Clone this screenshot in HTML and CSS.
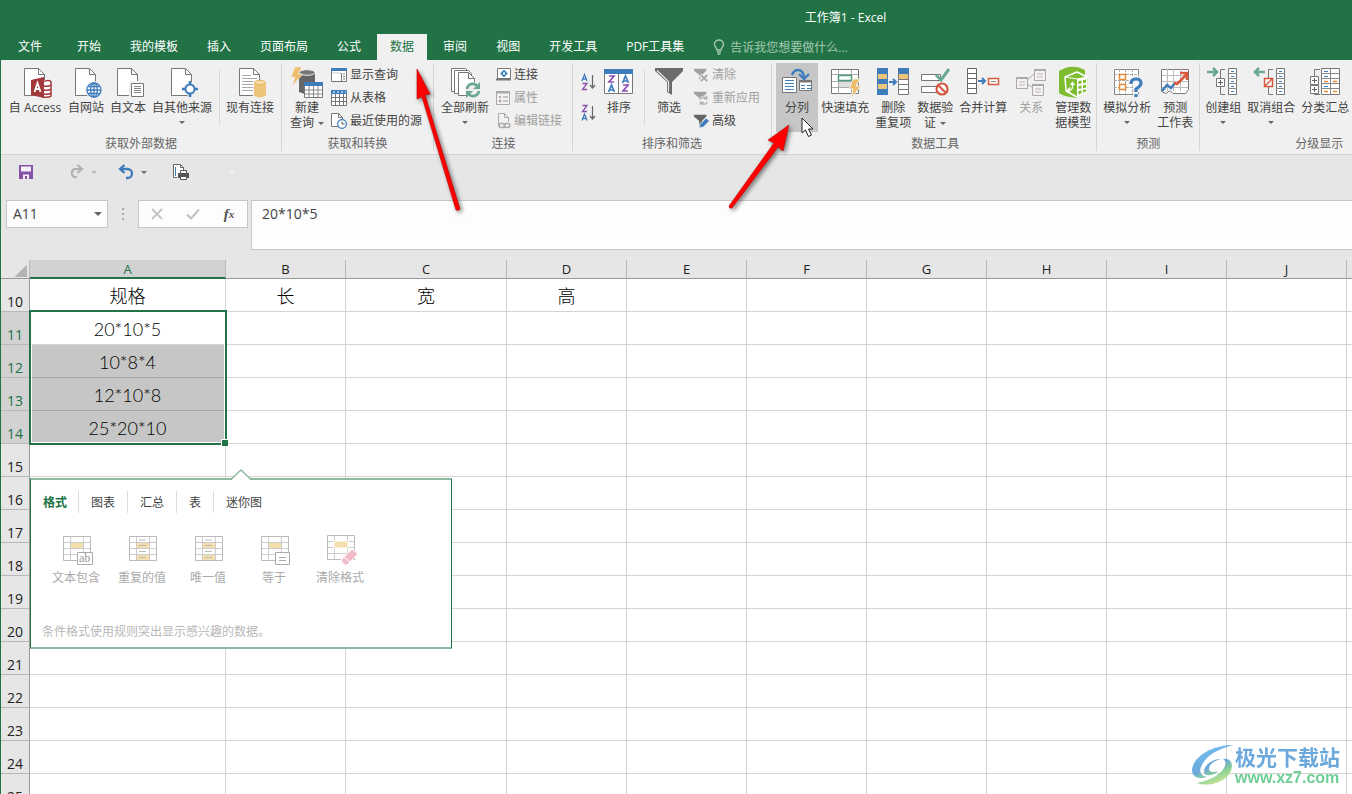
FILE: index.html
```html
<!DOCTYPE html>
<html lang="zh-CN">
<head>
<meta charset="utf-8">
<title>工作簿1 - Excel</title>
<link rel="stylesheet" href="styles.css">
</head>
<body>
<svg class="defs" aria-hidden="true">
  <symbol id="doc" viewBox="0 0 36 32"><path d="M7.5 1.5h14l6 6v21h-20z" fill="#fff" stroke="#777"/><path d="M21.5 1.5v6h6" fill="none" stroke="#777"/></symbol>
  <symbol id="funnel" viewBox="0 0 18 16"><path d="M1 1h14v2L10 8v7l-3-2V8L1 3z" fill="currentColor"/></symbol>
  <linearGradient id="wave" gradientUnits="userSpaceOnUse" x1="14" y1="4" x2="28" y2="38"><stop offset="0" stop-color="#62b4ee"/><stop offset=".5" stop-color="#5b9fd8"/><stop offset=".75" stop-color="#7fd08a"/><stop offset="1" stop-color="#c5e08a"/></linearGradient>
</svg>
<div class="window">
  <header class="titlebar">
    <h1 class="title">工作簿1 - Excel</h1>
    <nav class="tabs">
      <button class="tab tab-file">文件</button>
      <button class="tab">开始</button>
      <button class="tab">我的模板</button>
      <button class="tab">插入</button>
      <button class="tab">页面布局</button>
      <button class="tab">公式</button>
      <button class="tab tab-active">数据</button>
      <button class="tab">审阅</button>
      <button class="tab">视图</button>
      <button class="tab">开发工具</button>
      <button class="tab">PDF工具集</button>
      <label class="tellme">
        <svg width="12" height="16" viewBox="0 0 12 16" fill="none" stroke="#a5c9b3" stroke-width="1.4"><path d="M4 11C4 9 1.500 8 1.500 5.200a4.500 4.200 0 0 1 9 0C10.500 8 8 9 8 11z"/><path d="M4 13h4M4.500 15h3"/></svg>
        <input type="text" aria-label="告诉我" placeholder="告诉我您想要做什么...">
      </label>
    </nav>
  </header>

  <section class="ribbon">
    <div class="group">
      <div class="tools">
        <button class="big big-wide"><svg class="ico" viewBox="0 0 36 32"><use href="#doc"/><path d="M25 13h9v17h-9z" fill="#fff"/><path d="M25 15q8-3 9 0v14q-2 2-9 1" fill="#fff" stroke="#a4373a" stroke-width="1.500"/><path d="M26 19q6 1 8-1M26 23q6 1 8-1M26 27q6 1 8-1" stroke="#a4373a" stroke-width="1.500" fill="none"/><path d="M14 13l13-3v21l-13-3z" fill="#a4373a"/><path d="M17.500 25l3-9 3 9M18.500 22h4" stroke="#fff" stroke-width="1.800" fill="none"/></svg><span>自 Access</span></button>
        <button class="big"><svg class="ico" viewBox="0 0 36 32"><use href="#doc"/><circle cx="26" cy="23" r="9" fill="#f0f0f0"/><g fill="#fff" stroke="#3f7cbc" stroke-width="1.300"><circle cx="26" cy="23" r="7"/><ellipse cx="26" cy="23" rx="3.300" ry="7"/><path d="M26 16v14M19 23h14M20.500 19.500h11M20.500 26.500h11" fill="none"/></g></svg><span>自网站</span></button>
        <button class="big"><svg class="ico" viewBox="0 0 36 32"><use href="#doc"/><path d="M19 14h16v18H19z" fill="#f0f0f0"/><path d="M21.500 16.500h12v13h-12z" fill="#fff" stroke="#777"/><path d="M24 19.500h7M24 21.500h7M24 23.500h7M24 25.500h7" stroke="#888"/></svg><span>自文本</span></button>
        <button class="big"><svg class="ico" viewBox="0 0 36 32"><use href="#doc"/><circle cx="26" cy="22" r="7" fill="#f0f0f0"/><circle cx="26" cy="22" r="4.500" fill="#fff" stroke="#3f7cbc" stroke-width="2"/><path d="M26 14v4M26 26v4M18 22h4M30 22h4" stroke="#3f7cbc" stroke-width="2.500"/></svg><span>自其他来源</span><i class="caret"></i></button>
        <span class="rule"></span>
        <button class="big"><svg class="ico" viewBox="0 0 36 32"><use href="#doc"/><path d="M10 8.500h9M10 11.500h15M10 14.500h11M10 17.500h11M10 20.500h11M10 23.500h11" stroke="#aaa"/><path d="M21 14h14v18H21z" fill="#f0f0f0"/><path d="M22 15.500v13q6 4 12 0v-13z" fill="#edc57a"/><ellipse cx="28" cy="15.500" rx="5.500" ry="2.200" fill="#f5dcab" stroke="#e6b860"/></svg><span>现有连接</span></button>
      </div>
      <div class="caption">获取外部数据</div>
    </div>

    <div class="group">
      <div class="tools">
        <button class="big"><svg class="ico" viewBox="0 0 36 32"><path d="M10 6v19q8 4 16 0V6z" fill="#666"/><ellipse cx="18" cy="5.500" rx="8" ry="2.800" fill="#777" stroke="#f0f0f0"/><path d="M6 0h7L9 7h5L3 19l3-9H2z" fill="#edbd6c" stroke="#f0f0f0" stroke-width=".6"/><path d="M15.500 15.500h18v15h-18z" fill="#fff" stroke="#777"/><path d="M15 15h19v4H15z" fill="#3f7cbc"/><path d="M20 19v11M24.500 19v11M29 19v11M16 23h17M16 27h17" stroke="#888"/></svg><span>新建<br>查询 <i class="caret inline"></i></span></button>
        <div class="stack">
          <button class="small"><svg width="16" height="16" viewBox="0 0 16 16"><path d="M.5 1.500h15v13H.5z" fill="#fff" stroke="#777"/><path d="M0 1h16v3H0z" fill="#3f7cbc"/><path d="M1 6h9" stroke="#ccc"/><path d="M10.500 6v8M12 7h2M12 9.500h2M12 12h2" stroke="#777"/></svg>显示查询</button>
          <button class="small"><svg width="16" height="16" viewBox="0 0 16 16"><path d="M.5 1.500h15v14H.5z" fill="#fff" stroke="#777"/><path d="M0 0h16v4H0z" fill="#3f7cbc"/><path d="M2 2h2M6 2h2M10 2h2M14 2h1" stroke="#fff"/><path d="M4.500 4v11M8.500 4v11M12.500 4v11M0 7.500h15M0 11.500h15" stroke="#777"/></svg>从表格</button>
          <button class="small"><svg width="16" height="16" viewBox="0 0 16 16"><path d="M.5.5h7l4 4v9H.5z" fill="#fff" stroke="#777"/><path d="M7.500.5v4h4" fill="none" stroke="#777"/><circle cx="11" cy="11" r="4.400" fill="#fff" stroke="#3f7cbc" stroke-width="1.200"/><path d="M11 8.500V11h2.500" fill="none" stroke="#555"/></svg>最近使用的源</button>
        </div>
      </div>
      <div class="caption">获取和转换</div>
    </div>

    <div class="group group-links">
      <div class="tools">
        <button class="big"><svg class="ico" viewBox="0 0 36 32"><g fill="#fff" stroke="#777"><path d="M4.500 1.500h14l3 3v20h-17z"/><path d="M7.500 3.500h14l3 3v20h-17z"/><path d="M11.500 5.500h10l6 6v17h-16z"/><path d="M21.500 5.500v6h6" fill="none"/></g><circle cx="26" cy="23" r="8" fill="#f0f0f0"/><path d="M20 22a6 6 0 0 1 10.500-3M32 24a6 6 0 0 1-10.500 3" fill="none" stroke="#6aa892" stroke-width="2.600"/><path d="M33 15v7h-7zM19 31v-7h7z" fill="#6aa892"/></svg><span>全部刷新</span><i class="caret"></i></button>
        <div class="stack">
          <button class="small"><svg width="16" height="16" viewBox="0 0 16 16"><path d="M2.500 1.500h13v10h-13z" fill="#fff" stroke="#777"/><path d="M1 12.500h15" stroke="#777" stroke-width="2"/><circle cx="9" cy="6.500" r="2" fill="#fff" stroke="#3f7cbc" stroke-width="1.600"/><path d="M9 3v2M9 8v2M5.500 6.500h2M10.500 6.500h2" stroke="#3f7cbc" stroke-width="1.500"/></svg>连接</button>
          <button class="small" disabled><svg width="16" height="16" viewBox="0 0 16 16"><path d="M1.500 1.500h13v13h-13z" fill="#f4f0f4" stroke="#aaa"/><path d="M1 2.500h14" stroke="#aaa" stroke-width="2"/><circle cx="5" cy="7" r="1" fill="#999"/><circle cx="5" cy="11" r="1" fill="none" stroke="#999"/><path d="M8 7h5M8 11h5" stroke="#999"/></svg>属性</button>
          <button class="small" disabled><svg width="16" height="16" viewBox="0 0 16 16"><path d="M5 12.500H3.500v-12h6l4 4V9" fill="#f4f0f4" stroke="#aaa"/><path d="M9.500.5v4h4" fill="none" stroke="#aaa"/><rect x="4" y="10.500" width="6" height="4" rx="2" fill="none" stroke="#aaa" stroke-width="1.300"/><rect x="9" y="10.500" width="6" height="4" rx="2" fill="none" stroke="#aaa" stroke-width="1.300"/></svg>编辑链接</button>
        </div>
      </div>
      <div class="caption">连接</div>
    </div>

    <div class="group">
      <div class="tools">
        <div class="sorts">
          <button class="sort" aria-label="升序"><svg width="16" height="18" viewBox="0 0 16 18" fill="none"><path d="M2 8l2.500-6.500L7 8M3 6h3" stroke="#3f7cbc" stroke-width="1.300"/><path d="M2.500 10.500H7l-4.500 6H7" stroke="#8a4fae" stroke-width="1.300"/><path d="M12.500 2v13M10 12l2.500 3 2.500-3" stroke="#666" stroke-width="1.200"/></svg></button>
          <button class="sort" aria-label="降序"><svg width="16" height="18" viewBox="0 0 16 18" fill="none"><path d="M2.500 1.500H7L2.500 7.500H7" stroke="#8a4fae" stroke-width="1.300"/><path d="M2 16.500L4.500 10 7 16.500M3 14.500h3" stroke="#3f7cbc" stroke-width="1.300"/><path d="M12.500 2v13M10 12l2.500 3 2.500-3" stroke="#666" stroke-width="1.200"/></svg></button>
        </div>
        <button class="big"><svg class="ico" viewBox="0 0 36 32"><path d="M3.500 2.500h28v24h-28z" fill="#fff" stroke="#777"/><path d="M3 2h29v5H3z" fill="#3f7cbc"/><path d="M17.500 7v19" stroke="#777"/><g fill="none" stroke-width="1.700"><path d="M8 9h5l-5 6h5M22 18h5l-5 6h5" stroke="#8a4fae"/><path d="M7.500 25l3-7 3 7M9 23h3M21.500 16l3-7 3 7M23 14h3" stroke="#3f7cbc"/></g></svg><span>排序</span></button>
        <span class="rule"></span>
        <button class="big"><svg class="ico" viewBox="0 0 36 32"><path d="M4 1h28v3L21 15v13l-5-3V15L4 4z" fill="#6b6b6b"/><path d="M6 3.500l11.500 11V25" stroke="#e8e8e8" fill="none" stroke-width="1.200"/></svg><span>筛选</span></button>
        <div class="stack">
          <button class="small" disabled><svg width="16" height="16" viewBox="0 0 18 16"><use href="#funnel"/><path d="M8 8l8 7M16 8l-8 7" stroke="#f0f0f0" stroke-width="4"/><path d="M9 8l7 7M16 8l-7 7" stroke="#aaa" stroke-width="2"/></svg>清除</button>
          <button class="small" disabled><svg width="16" height="16" viewBox="0 0 18 16"><use href="#funnel"/><circle cx="12" cy="11" r="5.500" fill="#f0f0f0"/><path d="M8 10a4 4 0 0 1 7-1.500M16 12a4 4 0 0 1-7 1.500M15.500 5.500v3.500H12M8.500 16v-3H12" fill="none" stroke="#aaa" stroke-width="1.400"/></svg>重新应用</button>
          <button class="small"><svg width="16" height="16" viewBox="0 0 18 16"><g color="#666"><use href="#funnel"/></g><path d="M6.500 16l1.500-4.500 7-7 3.500 3.500-7 7z" fill="#3f7cbc" stroke="#f0f0f0"/></svg>高级</button>
        </div>
      </div>
      <div class="caption">排序和筛选</div>
    </div>

    <div class="group group-data">
      <div class="tools">
        <button class="big pressed"><svg class="ico" viewBox="0 0 36 32"><path d="M13 8q2-5 6-5 5 0 6 7" fill="none" stroke="#3f7cbc" stroke-width="2.600"/><path d="M20 7l5 5 5-5" fill="none" stroke="#3f7cbc" stroke-width="2.300"/><path d="M3.500 10.500h14v15h-14z" fill="#fff" stroke="#777"/><path d="M6 13.500h9M6 16.500h9M6 19.500h9M6 22.500h9" stroke="#3f7cbc"/><path d="M20.500 13.500h12v10h-12z" fill="#fff" stroke="#777"/><path d="M20 14.500h13" stroke="#777" stroke-width="2"/><path d="M22 18.500h4M28 18.500h4M22 21.500h4M28 21.500h4" stroke="#3f7cbc"/></svg><span>分列</span></button>
        <button class="big"><svg class="ico" viewBox="0 0 36 32"><path d="M4.500 2.500h27v24h-27z" fill="#fff" stroke="#777"/><path d="M11.500 3v24M24.500 3v24M5 7.500h26M5 14.500h26M5 20.500h26" stroke="#aaa"/><path d="M12 15h12v5H12z" fill="#ddd"/><path d="M11.500 8.500h13v5h-13z" fill="#fff" stroke="#4f9b80" stroke-width="1.500"/><path d="M26 12h7l-4 7h5L24 31l2-9h-4z" fill="#edbd6c" stroke="#f0f0f0"/></svg><span>快速填充</span></button>
        <button class="big"><svg class="ico" viewBox="0 0 36 32"><path d="M2 1h11v27H2z" fill="#3f7cbc"/><path d="M3 7h9v5H3zM3 17h9v5H3z" fill="#edc57a"/><path d="M23.500 1.500h10v26h-10z" fill="#fff" stroke="#777"/><path d="M23 1h11v6H23z" fill="#3f7cbc"/><path d="M24 7h9v5h-9z" fill="#edc57a"/><path d="M23 12.500h11M23 17.500h11M23 22.500h11" stroke="#777"/><path d="M14 15h6M18 12l3 3-3 3" fill="none" stroke="#3f7cbc" stroke-width="2"/></svg><span>删除<br>重复项</span></button>
        <button class="big"><svg class="ico" viewBox="0 0 36 32"><path d="M4.500 7.500h19v6h-19zM4.500 19.500h19v6h-19z" fill="#fff" stroke="#777"/><path d="M19 8l5 5 8-11" fill="none" stroke="#6aa892" stroke-width="3"/><circle cx="25" cy="22" r="5.500" fill="#fff" stroke="#d35a42" stroke-width="2.200"/><path d="M21 18l8 8" stroke="#d35a42" stroke-width="2.200"/></svg><span>数据验<br>证 <i class="caret inline"></i></span></button>
        <button class="big"><svg class="ico" viewBox="0 0 36 32"><path d="M2.500 1.500h9v25h-9z" fill="#fff" stroke="#666"/><path d="M2 6.500h9M2 11.500h9M2 16.500h9M2 21.500h9" stroke="#666"/><path d="M13 14h6M17 11l3 3-3 3" fill="none" stroke="#3f7cbc" stroke-width="2"/><path d="M23.500 11.500h10v6h-10z" fill="#fff" stroke="#d9593d" stroke-width="1.500"/><path d="M26 14.500h5" stroke="#888"/></svg><span>合并计算</span></button>
        <button class="big" disabled><svg class="ico" viewBox="0 0 36 32"><path d="M14 13l8-7M14 17l8 5" stroke="#aaa"/><g fill="#f4f0f4" stroke="#aaa"><path d="M3.500 10.500h11v11h-11zM21.500 2.500h11v11h-11zM19.500 17.500h11v11h-11z"/></g><path d="M3 11h12M21 3h12M19 18h12" stroke="#aaa" stroke-width="2"/><path d="M6 15h6M6 18h6M24 7h6M24 10h6M22 22h6M22 25h6" stroke="#bbb"/></svg><span>关系</span></button>
        <button class="big"><svg class="ico" viewBox="0 0 36 32"><path d="M4 4q13-8 26-1v7l3 1v14l-11 6Q9 30 4 26z" fill="#7dbb2f"/><path d="M10 10l12-5 10 5v15l-10 5-11-6z" fill="#7dbb2f" stroke="#fff" stroke-width="1.500" stroke-linejoin="round"/><path d="M10 10l12 2 10-2" fill="none" stroke="#fff"/><path d="M22 12l10-2v15l-10 5z" fill="#fff"/><path d="M23.500 14l3-.5v3l-3 .5zM28 13.200l3-.6v3l-3 .6zM23.500 19l3-.5v3l-3 .5zM28 18.200l3-.6v3l-3 .6zM23.500 24l3-.7v3l-3 1.200zM28 23l3-.7v2l-3 1.500z" fill="#7dbb2f"/><path d="M13 23h2.500q2-.5 2-3v-4M15.500 18l2-2.500 2 2.500M15 20.500L12.500 23l2.500 2" stroke="#fff" fill="none" stroke-width="1.300"/></svg><span>管理数<br>据模型</span></button>
      </div>
      <div class="caption">数据工具</div>
    </div>

    <div class="group group-forecast">
      <div class="tools">
        <button class="big"><svg class="ico" viewBox="0 0 36 32"><path d="M5.500 2.500h24v25h-24z" fill="#fff" stroke="#888"/><path d="M10.500 2v25M16.500 2v25M23.500 2v25M5 7.500h25M5 13.500h25M5 20.500h25" stroke="#aaa" stroke-dasharray="3 1"/><path d="M10.500 7.500h6v5h-6zM10.500 17.500h6v5h-6z" fill="#fff" stroke="#e88b35" stroke-width="1.500"/><path d="M22 17q0-5 5-5t5 4q0 3-5 6v3M27 27v4" fill="none" stroke="#f0f0f0" stroke-width="6"/><path d="M22 17q0-5 5-5t5 4q0 3-5 6v3M27 27v3" fill="none" stroke="#3f7cbc" stroke-width="3.200"/></svg><span>模拟分析</span><i class="caret"></i></button>
        <button class="big"><svg class="ico" viewBox="0 0 36 32"><path d="M4.500 2.500h27v20l-3 4H16l-3-3-4 3-4.500-2z" fill="#fff" stroke="#777"/><path d="M10.500 2v22M16.500 2v22M23.500 2v22M5 8.500h26M5 14.500h26M5 20.500h26" stroke="#bbb"/><path d="M5 24l5-6 4 3 4-5" fill="none" stroke="#3f7cbc" stroke-width="2.500"/><path d="M17 16l3 1 10-10M23 6h7v7" fill="none" stroke="#d9593d" stroke-width="2.500"/></svg><span>预测<br>工作表</span></button>
      </div>
      <div class="caption">预测</div>
    </div>

    <div class="group group-outline">
      <div class="tools">
        <button class="big"><svg class="ico" viewBox="0 0 36 32"><path d="M2 5h9M8 1l4 4-4 4" fill="none" stroke="#6aa892" stroke-width="2.500"/><path d="M20 2.500h-4.500v25H20" fill="none" stroke="#777"/><path d="M11.500 11.500h8v8h-8z" fill="#fff" stroke="#777"/><path d="M13 15.500h5M15.500 13v5" stroke="#666"/><path d="M23.500 1.500h8v26h-8z" fill="#fff" stroke="#777"/><path d="M23 6.500h9M23 11.500h9M23 16.500h9M23 21.500h9" stroke="#888"/><path d="M26 4.500h3M26 9.500h3M26 14.500h3M26 19.500h3M26 24.500h3" stroke="#3f7cbc"/></svg><span>创建组</span><i class="caret"></i></button>
        <button class="big"><svg class="ico" viewBox="0 0 36 32"><path d="M3 5h9M6 1L2 5l4 4" fill="none" stroke="#6aa892" stroke-width="2.500"/><path d="M20 2.500h-4.500v25H20" fill="none" stroke="#777"/><path d="M11.500 11.500h8v8h-8z" fill="#fff" stroke="#d9593d" stroke-width="1.500"/><path d="M12 19l7-7" stroke="#d9593d" stroke-width="1.500"/><path d="M23.500 1.500h8v26h-8z" fill="#fff" stroke="#777"/><path d="M23 6.500h9M23 11.500h9M23 16.500h9M23 21.500h9" stroke="#888"/><path d="M26 4.500h3M26 9.500h3M26 14.500h3M26 19.500h3M26 24.500h3" stroke="#3f7cbc"/></svg><span>取消组合</span><i class="caret"></i></button>
        <button class="big"><svg class="ico" viewBox="0 0 36 32"><path d="M13 2.500H7.500v25H13" fill="none" stroke="#777"/><path d="M3.500 9.500h8v8h-8zM3.500 18.500h8v8h-8z" fill="#fff" stroke="#777"/><path d="M5 13.500h5M7.500 11v5M5 22.500h5M7.500 20v5" stroke="#666"/><path d="M14.500 1.500h18v26h-18z" fill="#fff" stroke="#777"/><path d="M23.500 2v25M14 6.500h18M14 11.500h18M14 16.500h18M14 21.500h18" stroke="#888"/><path d="M17 4.500h4M17 9.500h4M17 19.500h4" stroke="#3f7cbc"/><path d="M17 14.500h4M17 24.500h4M26 14.500h4M26 24.500h4" stroke="#e88b35" stroke-width="1.500"/></svg><span>分类汇总</span></button>
      </div>
      <div class="caption">分级显示</div>
    </div>
  </section>

  <div class="quick">
    <button class="q" aria-label="保存"><svg width="16" height="16" viewBox="0 0 16 16"><path d="M1 1h14v14H1z" fill="#8452a8"/><path d="M3 2.500h10v5H3zM5 10.500h6V15H5z" fill="#f4f0f8"/><path d="M7 12h2v3H7z" fill="#8452a8"/></svg></button>
    <span class="q-pair q-redo"><button class="q" aria-label="恢复"><svg width="16" height="16" viewBox="0 0 16 16"><path d="M13 5H6.500a4.300 4.300 0 0 0 0 8H9M9.500 1L14 5l-4.500 4" fill="none" stroke="#b0b0b0" stroke-width="2"/></svg></button><i class="caret pale"></i></span>
    <span class="q-pair"><button class="q" aria-label="撤销"><svg width="16" height="16" viewBox="0 0 16 16"><path d="M3 5h6.500a4.300 4.300 0 0 1 0 9H8M6.500 1L2 5l4.500 4" fill="none" stroke="#3f7cbc" stroke-width="2.300"/></svg></button><i class="caret"></i></span>
    <button class="q q-print" aria-label="打印预览"><svg width="18" height="18" viewBox="0 0 18 18"><path d="M5 14.500H1.500v-13h7l3 3V7" fill="#fff" stroke="#666"/><path d="M8.500 1.500v3h3" fill="none" stroke="#666"/><path d="M3.500 4v9" stroke="#3f7cbc"/><path d="M6 10h11v5H6z" fill="#555"/><path d="M8.500 7.500h6v3h-6zM8.500 13.500h6v3h-6z" fill="#fff" stroke="#555"/></svg></button>
    <i class="caret ghost"></i>
  </div>

  <div class="formula">
    <div class="namebox"><input type="text" value="A11" aria-label="名称框"><i class="caret"></i></div>
    <span class="dots"></span>
    <div class="fx">
      <button aria-label="取消"><svg width="14" height="14" viewBox="0 0 14 14"><path d="M2 2l10 10M12 2L2 12" stroke="#c3c3c3" stroke-width="1.800"/></svg></button>
      <button aria-label="输入"><svg width="14" height="14" viewBox="0 0 14 14"><path d="M1 7.500l4 4 8-9" fill="none" stroke="#c3c3c3" stroke-width="2.200"/></svg></button>
      <button class="fn" aria-label="插入函数">f<small>x</small></button>
    </div>
    <textarea class="entry" aria-label="编辑栏">20*10*5</textarea>
  </div>

  <main class="sheet">
    <table>
      <colgroup><col class="c-num"><col class="c-a"><col class="c-n"><col class="c-c"><col class="c-n"><col class="c-n"><col class="c-n"><col class="c-n"><col class="c-n"><col class="c-n"><col class="c-n"><col class="c-n"></colgroup>
      <thead><tr><th class="corner"></th><th class="on">A</th><th>B</th><th>C</th><th>D</th><th>E</th><th>F</th><th>G</th><th>H</th><th>I</th><th>J</th><th></th></tr></thead>
      <tbody>
        <tr><th>10</th><td>规格</td><td>长</td><td>宽</td><td>高</td><td></td><td></td><td></td><td></td><td></td><td></td><td></td></tr>
        <tr><th class="on">11</th><td>20*10*5</td><td></td><td></td><td></td><td></td><td></td><td></td><td></td><td></td><td></td><td></td></tr>
        <tr><th class="on">12</th><td class="sel">10*8*4</td><td></td><td></td><td></td><td></td><td></td><td></td><td></td><td></td><td></td><td></td></tr>
        <tr><th class="on">13</th><td class="sel">12*10*8</td><td></td><td></td><td></td><td></td><td></td><td></td><td></td><td></td><td></td><td></td></tr>
        <tr><th class="on">14</th><td class="sel">25*20*10</td><td></td><td></td><td></td><td></td><td></td><td></td><td></td><td></td><td></td><td></td></tr>
        <tr><th>15</th><td></td><td></td><td></td><td></td><td></td><td></td><td></td><td></td><td></td><td></td><td></td></tr>
        <tr><th>16</th><td></td><td></td><td></td><td></td><td></td><td></td><td></td><td></td><td></td><td></td><td></td></tr>
        <tr><th>17</th><td></td><td></td><td></td><td></td><td></td><td></td><td></td><td></td><td></td><td></td><td></td></tr>
        <tr><th>18</th><td></td><td></td><td></td><td></td><td></td><td></td><td></td><td></td><td></td><td></td><td></td></tr>
        <tr><th>19</th><td></td><td></td><td></td><td></td><td></td><td></td><td></td><td></td><td></td><td></td><td></td></tr>
        <tr><th>20</th><td></td><td></td><td></td><td></td><td></td><td></td><td></td><td></td><td></td><td></td><td></td></tr>
        <tr><th>21</th><td></td><td></td><td></td><td></td><td></td><td></td><td></td><td></td><td></td><td></td><td></td></tr>
        <tr><th>22</th><td></td><td></td><td></td><td></td><td></td><td></td><td></td><td></td><td></td><td></td><td></td></tr>
        <tr><th>23</th><td></td><td></td><td></td><td></td><td></td><td></td><td></td><td></td><td></td><td></td><td></td></tr>
        <tr><th>24</th><td></td><td></td><td></td><td></td><td></td><td></td><td></td><td></td><td></td><td></td><td></td></tr>
        <tr><th>25</th><td></td><td></td><td></td><td></td><td></td><td></td><td></td><td></td><td></td><td></td><td></td></tr>
      </tbody>
    </table>
    <div class="selection"></div>

    <aside class="analysis">
      <svg class="beak" width="20" height="11" viewBox="0 0 20 11"><path d="M1 10L10 1l9 9v1H1z" fill="#fff"/><path d="M0 9.500h1L10 1l9 8.500h1" fill="none" stroke="#8db99f" stroke-width="1.500"/></svg>
      <div class="a-tabs"><button class="cur">格式</button><button>图表</button><button>汇总</button><button>表</button><button>迷你图</button></div>
      <div class="a-items">
        <button><svg width="32" height="32" viewBox="0 0 32 32"><path d="M3.500 2.500h27v24h-27z" fill="#fff" stroke="#bbb"/><path d="M10.500 3v23M23.500 3v23M4 8.500h26M4 14.500h26M4 20.500h26" stroke="#ccc"/><path d="M11 9h12v5H11z" fill="#f5deae"/><path d="M17.500 18.500h15v12h-15z" fill="#fff" stroke="#aaa"/><text x="19" y="28" class="ab">ab</text></svg>文本包含</button>
        <button><svg width="32" height="32" viewBox="0 0 32 32"><path d="M3.500 2.500h27v24h-27z" fill="#fff" stroke="#bbb"/><path d="M10.500 3v23M23.500 3v23M4 8.500h26M4 14.500h26M4 20.500h26" stroke="#ccc"/><path d="M11 9h12v5H11zM11 21h12v5H11z" fill="#f5deae"/><path d="M13 6h7M13 11.500h7M13 17.500h7M13 23.500h7" stroke="#bbb"/></svg>重复的值</button>
        <button><svg width="32" height="32" viewBox="0 0 32 32"><path d="M3.500 2.500h27v24h-27z" fill="#fff" stroke="#bbb"/><path d="M10.500 3v23M23.500 3v23M4 8.500h26M4 14.500h26M4 20.500h26" stroke="#ccc"/><path d="M11 9h12v5H11zM11 21h12v5H11z" fill="#f5deae"/><path d="M13 6h7M13 11.500h7M13 17.500h7M13 23.500h7" stroke="#bbb"/></svg>唯一值</button>
        <button><svg width="32" height="32" viewBox="0 0 32 32"><path d="M3.500 2.500h27v24h-27z" fill="#fff" stroke="#bbb"/><path d="M10.500 3v23M23.500 3v23M4 8.500h26M4 14.500h26M4 20.500h26" stroke="#ccc"/><path d="M11 9h12v5H11z" fill="#f5deae"/><path d="M17.500 18.500h14v12h-14z" fill="#fff" stroke="#aaa"/><path d="M21 23.500h7M21 26.500h7" stroke="#aaa"/></svg>等于</button>
        <button><svg width="32" height="32" viewBox="0 0 32 32"><path d="M3.500 1.500h27v24h-27z" fill="#fff" stroke="#bbb"/><path d="M10.500 2v23M23.500 2v23M4 7.500h26M4 13.500h26M4 19.500h26" stroke="#ccc"/><path d="M10 7h14v7H10z" fill="#f5deae" stroke="#fff"/><path d="M17 26L28 15l6 5-11 11h-3z" fill="#f2bcc8" stroke="#fff"/><path d="M20 23l6 5" stroke="#fff"/></svg>清除格式</button>
      </div>
      <p class="a-note">条件格式使用规则突出显示感兴趣的数据。</p>
    </aside>
  </main>

  <div class="watermark">
    <svg width="44" height="42" viewBox="0 0 44 42" fill="url(#wave)"><path d="M42 0C22 0 2 11 1 25c0 7 7 10 15 7-6-1-8-5-6-10C14 11 27 4 42 0z"/><path d="M6 38c13 5 34-2 35-17 0-5-4-8-9-7 4 2 3 8-2 13-6 6-15 9-24 11z"/><path d="M13 27c0-7 8-13 17-13-8 2-12 6-12 10 0 3 4 4 9 2-4 5-14 6-14 1z"/></svg>
    <div><strong>极光下载站</strong><span>www.xz7.com</span></div>
  </div>
  <svg class="arrow arrow-a" width="60" height="150" viewBox="0 0 60 150"><path d="M7 5l13 25-5 1 35 114q-1 2-4 1L12 33l-5 2z" fill="#f00" stroke="#b00" stroke-width=".6"/></svg>
  <svg class="arrow arrow-b" width="70" height="92" viewBox="0 0 70 92"><path d="M65 4l-6 26-5-4L8 87q-3 1-3-2L50 22l-6-3z" fill="#f00" stroke="#b00" stroke-width=".6"/></svg>
  <svg class="pointer" width="14" height="21" viewBox="0 0 14 21"><path d="M1 1v15l3.500-3 3 6.500 3-1.500-3-6H12z" fill="#fff" stroke="#222"/></svg>
</div>
</body>
</html>
```

FILE: styles.css
```css
* { box-sizing: border-box; }
body {
  margin: 0;
  overflow: hidden;
  background: #e6e6e6;
  color: #444;
  font: 12px/15px "Open Sans", "Noto Sans CJK SC", sans-serif;
}
button, input, textarea { font: inherit; color: inherit; border: 0; background: none; padding: 0; margin: 0; outline: 0; }
svg { display: block; overflow: visible; flex: none; }
.defs { position: absolute; width: 0; height: 0; }
.window { position: relative; display: flex; flex-direction: column; height: 100vh; overflow: hidden; border-left: 1px solid #217346; }

.titlebar { flex: none; background: #217346; color: #fff; }
.title { margin: 0; padding: 10px 0 8px 338px; text-align: center; font-size: 12px; line-height: 16px; font-weight: 400; }
.tabs { display: flex; gap: 3px; padding-left: 4px; height: 26px; }
.tab { padding: 0 13px 2px; white-space: nowrap; }
.tab-file { margin-right: 6px; }
.tab-active { background: #f0f0f0; color: #217346; }
.tellme { display: flex; align-items: center; gap: 5px; margin-left: 13px; }
.tellme input { width: 160px; }
.tellme input::placeholder { color: #a5c9b3; opacity: 1; }

.ribbon { flex: none; display: flex; overflow: hidden; background: #f0f0f0; border-bottom: 1px solid #d2d2d2; padding: 3px 0; }
.group { flex: none; display: flex; flex-direction: column; padding: 0 4px; border-right: 1px solid #d5d5d5; }
.group-links { padding-right: 3px; }
.group-data { padding-right: 2px; }
.group-forecast { padding: 0 3px; }
.group-outline { width: 239px; padding: 0 2px; }
.tools { display: flex; flex: none; height: 73px; }
.caption { text-align: center; color: #666; }
.big { display: flex; flex-direction: column; align-items: center; min-width: 42px; height: 69px; padding: 4px 3px 0; white-space: nowrap; }
.big-wide { min-width: 60px; }
.big:disabled, .small:disabled { color: #a0a0a0; }
.ico { width: 36px; height: 32px; margin: 0 -3px 1px; }
.pressed { background: #c6c6c6; }
.rule { width: 1px; margin: 7px 3px 10px 4px; background: #d9d9d9; }
.stack { display: flex; flex-direction: column; padding: 0 7px 0 3px; }
.small { display: flex; align-items: center; gap: 3px; height: 23px; white-space: nowrap; }
.sorts { display: flex; flex-direction: column; gap: 13px; padding: 10px 2px 0 3px; }
.caret { display: block; width: 0; height: 0; margin-top: 6px; border: 3px solid transparent; border-top-color: #666; border-bottom: 0; }
.caret.inline { display: inline-block; margin: 0 0 2px 1px; }
.caret.pale { border-top-color: #b8b8b8; }
.caret.ghost { border-top-color: #f3f3f3; }

.quick { flex: none; display: flex; align-items: center; height: 45px; padding: 0 17px 11px; }
.quick .caret { margin: 0; }
.q-pair { display: flex; align-items: center; gap: 7px; margin-right: 21px; }
.q-redo { margin-left: 34px; }
.q-print { margin-right: 39px; margin-left: 4px; }

.formula { flex: none; display: flex; align-items: flex-start; height: 60px; padding-left: 5px; font-size: 14px; line-height: 18px; }
.namebox { display: flex; align-items: center; width: 102px; height: 28px; padding: 0 5px 0 6px; background: #fdfdfd; border: 1px solid #c6c6c6; }
.namebox input { flex: 1; min-width: 0; }
.namebox .caret { margin: 0; border-width: 4px 4px 0; }
.dots { width: 2px; height: 12px; margin: 8px 14px; background: repeating-linear-gradient(#aaa 0 2px, transparent 2px 5px); }
.fx { display: flex; width: 110px; height: 28px; background: #fdfdfd; border: 1px solid #c6c6c6; }
.fx button { flex: 1; display: flex; align-items: center; justify-content: center; }
.fx .fn { font: italic bold 15px "Liberation Serif", serif; color: #555; }
.fn small { font-size: 11px; }
.entry { flex: 1; height: 50px; margin-left: 3px; padding: 4px 10px; resize: none; background: #fdfdfd; border: 1px solid #c6c6c6; border-right: 0; }

.sheet { position: relative; flex: 1; min-height: 0; overflow: hidden; background: #fff; }
table { table-layout: fixed; width: 1466px; border-spacing: 0; }
.c-num { width: 29px; }
.c-a { width: 196px; }
.c-n { width: 120px; }
.c-c { width: 161px; }
th, td { padding: 0; border-right: 1px solid #d4d4d4; border-bottom: 1px solid #d4d4d4; text-align: center; }
thead th { height: 19px; background: #e6e6e6; border-right-color: #b8b8b8; border-bottom-color: #999; color: #222; font-size: 13px; line-height: 17px; font-weight: 400; }
thead .on { background: #d2d2d2; border-bottom: 2px solid #217346; color: #217346; line-height: 16px; }
thead .corner { background: linear-gradient(135deg, transparent 50%, #b4b4b4 50%) 14px 5px / 12px 12px no-repeat #e6e6e6; }
tbody th { height: 33px; padding-top: 14px; background: #e6e6e6; border-right-color: #999; border-bottom-color: #b8b8b8; color: #222; font-size: 14px; line-height: 18px; font-weight: 400; }
tbody .on { background: #d2d2d2; color: #217346; }
td { padding-top: 2px; font-family: Lato, "Noto Sans CJK SC", sans-serif; font-size: 18px; line-height: 30px; font-weight: 300; color: #000; }
.sel { background: #c6c6c6; border-bottom-color: #a6a6a6; }
.selection { position: absolute; left: 28px; top: 50px; width: 198px; height: 135px; border: 2px solid #217346; box-shadow: inset 0 0 0 1px #fff; }
.selection::after { content: ""; position: absolute; right: -3px; bottom: -3px; width: 6px; height: 6px; background: #217346; border: solid #fff; border-width: 1px 0 0 1px; }

.analysis { position: absolute; left: 29px; top: 218px; width: 422px; height: 171px; padding: 11px; background: #fff; border: 1px solid #217346; border-top: 2px solid #8db99f; border-bottom: 2px solid #8db99f; }
.beak { position: absolute; left: 200px; top: -11px; }
.a-tabs { display: flex; height: 22px; }
.a-tabs button { padding: 0 12px; border-right: 1px solid #ddd; }
.a-tabs .cur { padding-left: 1px; padding-right: 11px; color: #217346; font-weight: 700; }
.a-tabs button:last-child { border: 0; }
.a-items { display: flex; padding: 21px 0 0 1px; }
.a-items button { display: flex; flex-direction: column; align-items: center; gap: 4px; width: 66px; color: #aaa; white-space: nowrap; }
.ab { font: 12px "Liberation Serif", serif; fill: #999; }
.a-note { margin: 39px 0 0; color: #b8b8b8; }

.watermark { position: absolute; right: 12px; bottom: 7px; display: flex; align-items: center; opacity: .9; }
.watermark div { display: flex; flex-direction: column; }
.watermark strong { color: #5b9fd8; font-size: 21px; line-height: 24px; }
.watermark span { color: #5fc98a; font: bold 16px/18px "Liberation Sans", sans-serif; }
.arrow { position: absolute; filter: drop-shadow(2px 2px 2px rgba(0, 0, 0, .5)); }
.arrow-a { left: 409px; top: 64px; }
.arrow-b { left: 723px; top: 121px; }
.pointer { position: absolute; left: 800px; top: 117px; }
```
